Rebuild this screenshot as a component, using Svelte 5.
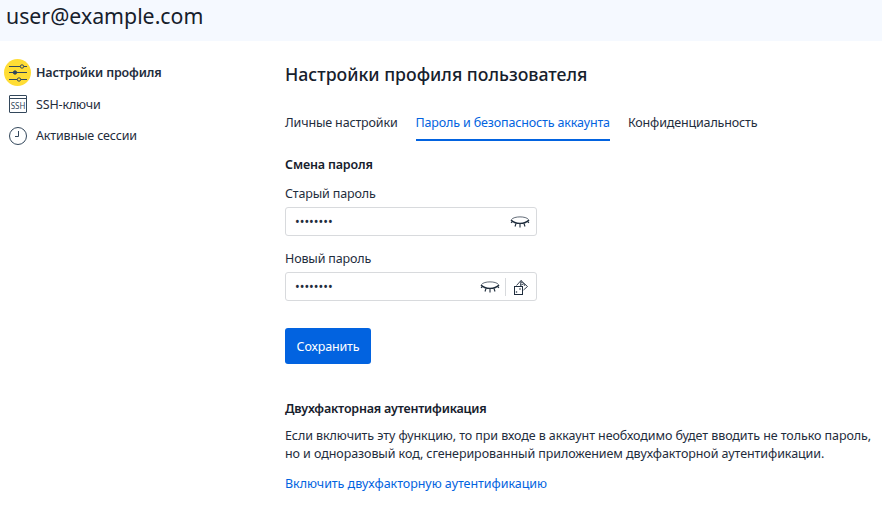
<script>
  let tabs = ['Личные настройки', 'Пароль и безопасность аккаунта', 'Конфиденциальность'];
  let activeTab = $state(1);
</script>

{#snippet eye()}
  <svg class="eye" width="20" height="14" viewBox="0 0 20 14" fill="none" stroke="#1f2d3d" stroke-width="1">
    <path d="M1.500 4.500C4 1 16 1 18.500 4.500" stroke-width="0.700" />
    <path d="M1 5C5 9.500 15 9.500 19 5" stroke-width="1.400" />
    <path d="M2.500 6.500l-1.500 1.200M6 8.500l-1 3M10 9v3.500M14 8.500l1 3M17.500 6.500l1.500 1.200" stroke-width="1.100" />
  </svg>
{/snippet}

<header>user@example.com</header>

<div class="page">
  <nav>
    <a href="#profile" class="item active">
      <span class="icon round">
        <svg width="18" height="18" viewBox="0 0 18 18" fill="none" stroke="#33475b" stroke-width="1">
          <path d="M0 2.500h18M0 8.500h18M0 15.500h18" />
          <circle cx="13" cy="2.500" r="1.700" fill="#ffdd35" />
          <circle cx="6" cy="8.500" r="1.700" fill="#33475b" />
          <circle cx="10" cy="15.500" r="1.700" fill="#ffdd35" />
        </svg>
      </span>
      <b>Настройки профиля</b>
    </a>
    <a href="#ssh" class="item">
      <span class="icon">
        <svg width="18" height="18" viewBox="0 0 18 18" fill="none" stroke="#33475b">
          <rect x="0.500" y="0.500" width="17" height="17" rx="0.500" />
          <path d="M1 3.500h16" />
          <text x="9" y="13.500" text-anchor="middle" class="ssh">SSH</text>
        </svg>
      </span>
      SSH-ключи
    </a>
    <a href="#sessions" class="item">
      <span class="icon">
        <svg width="18" height="18" viewBox="0 0 18 18" fill="none" stroke="#33475b">
          <circle cx="9" cy="9" r="8.500" />
          <path d="M9.500 4v5.500H6" />
        </svg>
      </span>
      Активные сессии
    </a>
  </nav>

  <main>
    <h1>Настройки профиля пользователя</h1>

    <div class="tabs">
      {#each tabs as tab, i}
        <button class="tab" class:selected={i === activeTab} onclick={() => (activeTab = i)}>{tab}</button>
      {/each}
    </div>

    <h2 class="first">Смена пароля</h2>

    <label class="field">
      <span>Старый пароль</span>
      <div class="input">
        <input type="password" value="password" />
        {@render eye()}
      </div>
    </label>

    <label class="field">
      <span>Новый пароль</span>
      <div class="input">
        <input type="password" value="password" />
        {@render eye()}
        <i class="divider"></i>
        <svg class="dice" width="16" height="16" viewBox="0 0 16 16" fill="none" stroke="#1f2d3d" stroke-width="1">
          <path d="M3.500 6.500L8 1.500l6.500 6-4 3.500M8 1.500l-.5 5M11 4.500l-3.500 2" stroke-width="0.900" />
          <rect x="1.500" y="7.500" width="8" height="8" fill="#fff" />
          <circle cx="3.500" cy="13" r="0.800" fill="#1f2d3d" stroke="none" />
          <circle cx="7" cy="10" r="0.800" fill="#1f2d3d" stroke="none" />
          <circle cx="11.500" cy="6" r="0.800" fill="#1f2d3d" stroke="none" />
          <circle cx="9" cy="3.500" r="0.700" fill="#1f2d3d" stroke="none" />
        </svg>
      </div>
    </label>

    <button class="save">Сохранить</button>

    <h2 class="two-factor">Двухфакторная аутентификация</h2>
    <p>Если включить эту функцию, то при входе в аккаунт необходимо будет вводить не только пароль, но и одноразовый код, сгенерированный приложением двухфакторной аутентификации.</p>
    <a class="link" href="#enable">Включить двухфакторную аутентификацию</a>
  </main>
</div>

<style>
  :global(body) {
    margin: 0;
    background: #fff;
    color: #1f2d3d;
    font-family: "Noto Sans", sans-serif;
    font-size: 12.5px;
    letter-spacing: -0.15px;
  }

  header {
    height: 41px;
    padding-left: 6px;
    background: #f5f9ff;
    font-size: 21.3px;
    letter-spacing: 0;
    line-height: 32px;
    color: #16202c;
  }

  .page {
    display: flex;
  }

  nav {
    width: 285px;
    flex-shrink: 0;
    padding-top: 16px;
    box-sizing: border-box;
  }

  .item {
    display: flex;
    align-items: center;
    height: 31.5px;
    gap: 9px;
    padding-left: 9px;
    color: #1f2d3d;
    text-decoration: none;
  }

  .item b {
    font-weight: 600;
  }

  .icon {
    position: relative;
    width: 18px;
    height: 18px;
    display: flex;
    align-items: center;
    justify-content: center;
  }

  .round::before {
    content: '';
    position: absolute;
    left: -5px;
    top: -4.500px;
    width: 27px;
    height: 27px;
    border-radius: 50%;
    background: #ffdd35;
  }

  .round svg {
    position: relative;
    flex-shrink: 0;
  }

  .ssh {
    font-size: 8px;
    fill: #33475b;
    stroke: none;
    letter-spacing: 0;
  }

  main {
    width: 590px;
    padding-top: 20px;
  }

  h1 {
    margin: 0 0 19px;
    font-size: 17.7px;
    letter-spacing: 0;
    font-weight: 500;
    line-height: 26px;
    color: #16202c;
  }

  .tabs {
    display: flex;
    gap: 18px;
    margin-bottom: 15px;
  }

  .tab {
    height: 35px;
    padding: 0;
    border: 0;
    border-bottom: 2px solid transparent;
    background: none;
    font: inherit;
    letter-spacing: inherit;
    color: #1f2d3d;
    cursor: pointer;
  }

  .tab.selected {
    color: #0263e0;
    border-bottom-color: #0263e0;
  }

  h2 {
    margin: 0;
    font-size: 12.5px;
    font-weight: 600;
    line-height: 18px;
    color: #16202c;
  }

  .first {
    margin-bottom: 11px;
  }

  .two-factor {
    letter-spacing: -0.2px;
  }

  .field {
    display: block;
    margin-bottom: 14px;
  }

  .field span {
    display: block;
    line-height: 18px;
    margin-bottom: 4px;
  }

  .input {
    display: flex;
    align-items: center;
    width: 252px;
    height: 29px;
    box-sizing: border-box;
    border: 1px solid #d8dadd;
    border-radius: 3px;
  }

  .input input {
    flex: 1;
    min-width: 0;
    height: 100%;
    box-sizing: border-box;
    padding: 0 0 0 9px;
    border: 0;
    outline: 0;
    background: none;
    font: inherit;
    letter-spacing: 0;
    color: #1f2d3d;
  }

  .eye {
    margin-right: 6px;
  }

  .divider {
    width: 1px;
    height: 18px;
    margin: 0 7px 0 -1px;
    background: #d8dadd;
  }

  .dice {
    margin-right: 7px;
  }

  .save {
    display: block;
    width: 86px;
    height: 36px;
    margin: 27px 0 36px;
    border: 0;
    border-radius: 3px;
    background: #0263e0;
    color: #fff;
    font: inherit;
    letter-spacing: inherit;
    cursor: pointer;
  }

  p {
    margin: 9px 0 12px;
    line-height: 18px;
    letter-spacing: -0.08px;
  }

  .link {
    letter-spacing: -0.04px;
    color: #0263e0;
    text-decoration: none;
  }
</style>
